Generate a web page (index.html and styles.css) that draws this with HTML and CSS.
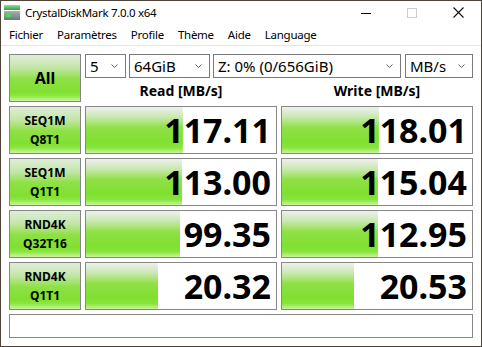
FILE: index.html
```html
<!DOCTYPE html>
<html lang="fr">
<head>
    <meta charset="UTF-8">
    <title>CrystalDiskMark 7.0.0 x64</title>
    <link rel="stylesheet" href="styles.css">
</head>
<body>
    <div class="window">
        <div class="titlebar">
            <svg class="app-icon" width="16" height="16" viewBox="0 0 16 16">
                <defs>
                    <linearGradient id="top" x1="0" y1="0" x2="0" y2="1">
                        <stop offset="0" stop-color="#8fe28a"/>
                        <stop offset="1" stop-color="#2e9e48"/>
                    </linearGradient>
                    <linearGradient id="body" x1="0" y1="0" x2="0" y2="1">
                        <stop offset="0" stop-color="#a7b1b3"/>
                        <stop offset="1" stop-color="#6d787a"/>
                    </linearGradient>
                </defs>
                <rect x="0" y="0" width="16" height="5" fill="url(#top)"/>
                <rect x="0" y="6" width="16" height="9" fill="url(#body)"/>
                <rect x="2" y="9" width="5" height="3" fill="#56d35a"/>
            </svg>
            <span class="title">CrystalDiskMark 7.0.0 x64</span>
            <div class="caption-buttons">
                <span class="cap-btn">
                    <svg width="10" height="10" viewBox="0 0 10 10"><line x1="0" y1="5.5" x2="10" y2="5.5" stroke="#000" stroke-width="1"/></svg>
                </span>
                <span class="cap-btn">
                    <svg width="10" height="10" viewBox="0 0 10 10"><rect x="0.5" y="0.5" width="9" height="9" fill="none" stroke="#cccccc" stroke-width="1"/></svg>
                </span>
                <span class="cap-btn">
                    <svg width="11" height="11" viewBox="0 0 11 11"><path d="M0.5 0.5 L10.5 10.5 M10.5 0.5 L0.5 10.5" stroke="#111" stroke-width="1.1"/></svg>
                </span>
            </div>
        </div>

        <div class="menubar">
            <span class="menu-item">Fichier</span>
            <span class="menu-item">Paramètres</span>
            <span class="menu-item">Profile</span>
            <span class="menu-item">Thème</span>
            <span class="menu-item">Aide</span>
            <span class="menu-item">Language</span>
        </div>

        <div class="content">
            <div class="bench-grid">
                <div class="btn-all">All</div>
                <div class="controls">
                    <div class="selects">
                        <div class="select sel-count"><span>5</span><svg class="chevron" width="7" height="4" viewBox="0 0 7 4"><polyline points="0.5,0.5 3.5,3.5 6.5,0.5" fill="none" stroke="#606060"/></svg></div>
                        <div class="select sel-size"><span>64GiB</span><svg class="chevron" width="7" height="4" viewBox="0 0 7 4"><polyline points="0.5,0.5 3.5,3.5 6.5,0.5" fill="none" stroke="#606060"/></svg></div>
                        <div class="select sel-drive"><span>Z: 0% (0/656GiB)</span><svg class="chevron" width="7" height="4" viewBox="0 0 7 4"><polyline points="0.5,0.5 3.5,3.5 6.5,0.5" fill="none" stroke="#606060"/></svg></div>
                        <div class="select sel-unit"><span>MB/s</span><svg class="chevron" width="7" height="4" viewBox="0 0 7 4"><polyline points="0.5,0.5 3.5,3.5 6.5,0.5" fill="none" stroke="#606060"/></svg></div>
                    </div>
                    <div class="col-heads">
                        <div class="col-head">Read [MB/s]</div>
                        <div class="col-head">Write [MB/s]</div>
                    </div>
                </div>

                <div class="test-label">SEQ1M<br>Q8T1</div>
                <div class="result" style="--fill: 51%"><span class="value">117.11</span></div>
                <div class="result" style="--fill: 51%"><span class="value">118.01</span></div>

                <div class="test-label">SEQ1M<br>Q1T1</div>
                <div class="result" style="--fill: 50.5%"><span class="value">113.00</span></div>
                <div class="result" style="--fill: 50.5%"><span class="value">115.04</span></div>

                <div class="test-label">RND4K<br>Q32T16</div>
                <div class="result" style="--fill: 49.5%"><span class="value">99.35</span></div>
                <div class="result" style="--fill: 50.5%"><span class="value">112.95</span></div>

                <div class="test-label">RND4K<br>Q1T1</div>
                <div class="result" style="--fill: 38%"><span class="value">20.32</span></div>
                <div class="result" style="--fill: 38%"><span class="value">20.53</span></div>

                <div class="comment"></div>
            </div>
        </div>
    </div>
</body>
</html>
```

FILE: styles.css
```css
/* Base */
body {
    margin: 0;
    font-family: 'Noto Sans', 'Open Sans', Arial, sans-serif;
    color: #000;
    background: #fff;
}

.window {
    width: 482px;
    height: 347px;
    box-sizing: border-box;
    border: 1px solid #4f4236;
    background: #fff;
    display: flex;
    flex-direction: column;
}

/* Title bar */
.titlebar {
    height: 23px;
    display: flex;
    align-items: center;
    font-size: 11.5px;
    letter-spacing: -0.3px;
    line-height: 23px;
}

.app-icon {
    margin-left: 3px;
    margin-right: 5px;
    flex-shrink: 0;
}

.title {
    flex: 1;
}

.caption-buttons {
    display: flex;
    align-self: stretch;
}

.cap-btn {
    width: 46px;
    display: flex;
    align-items: center;
    justify-content: center;
}

/* Menu */
.menubar {
    height: 21px;
    display: flex;
    align-items: center;
    padding-left: 1px;
    font-size: 11.5px;
    letter-spacing: -0.25px;
    border-bottom: 1px solid #e6e6e6;
}

.menu-item {
    padding: 0 7px;
    line-height: 21px;
}

/* Bench area */
.content {
    padding: 8px 8px 0 8px;
}

.bench-grid {
    display: grid;
    grid-template-columns: 72px 192px 192px;
    grid-template-rows: repeat(5, 48px) 24px;
    gap: 4px;
}

.btn-all,
.test-label {
    box-sizing: border-box;
    border: 1px solid #858585;
    background: linear-gradient(to bottom, #dfeed8 0%, #c2e6a6 28%, #8fe046 52%, #80e030 80%, #8ce63e 88%, #c8f6a0 100%);
    display: flex;
    align-items: center;
    justify-content: center;
    text-align: center;
    font-weight: bold;
}

.btn-all {
    font-size: 16px;
}

.test-label {
    font-size: 12px;
    line-height: 19px;
}

.controls {
    grid-column: 2 / 4;
    display: flex;
    flex-direction: column;
}

.selects {
    display: flex;
    height: 24px;
}

.select {
    box-sizing: border-box;
    height: 24px;
    border: 1px solid #7a7a7a;
    display: flex;
    align-items: center;
    justify-content: space-between;
    padding: 0 7px 0 4px;
    font-size: 15px;
}

.sel-count { width: 41px; margin-right: 3px; }
.sel-size { width: 81px; margin-right: 3px; }
.sel-drive { width: 188px; margin-right: 4px; }
.sel-unit { width: 68px; }

.col-heads {
    flex: 1;
    display: grid;
    grid-template-columns: 192px 192px;
    gap: 4px;
    align-items: center;
}

.col-head {
    text-align: center;
    font-size: 14px;
    font-weight: bold;
}

.result {
    box-sizing: border-box;
    border: 1px solid #878787;
    background: linear-gradient(to bottom, #f0f0f0 0%, #c8e8b0 22%, #8fe046 45%, #80e030 75%, #88e43a 88%, #c6f59c 100%) no-repeat left top;
    background-size: var(--fill) 100%;
    background-color: #fff;
    display: flex;
    align-items: center;
    justify-content: flex-end;
    padding-right: 5px;
}

.value {
    font-size: 34px;
    font-weight: bold;
    line-height: 1;
}

.comment {
    grid-column: 1 / 4;
    border: 1px solid #878787;
    background: #fff;
}
```
